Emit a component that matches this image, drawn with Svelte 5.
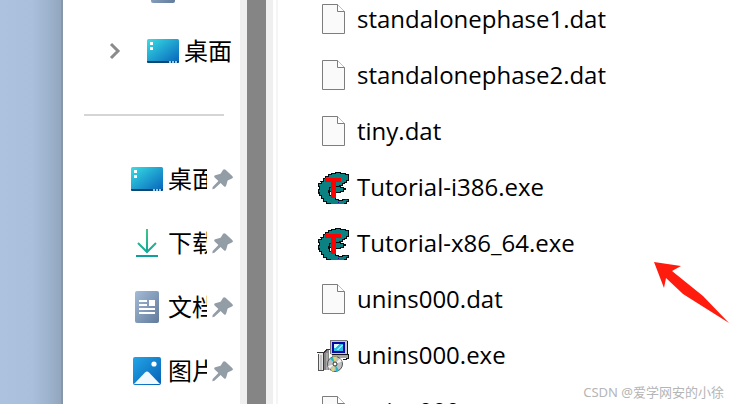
<script lang="ts">
	type FileKind = 'blank' | 'tutorial' | 'setup';

	const pinned = [
		{ name: '桌面', icon: 'desktop' },
		{ name: '下载', icon: 'download' },
		{ name: '文档', icon: 'document' },
		{ name: '图片', icon: 'picture' }
	];

	const files: { name: string; kind: FileKind }[] = [
		{ name: 'standalonephase1.dat', kind: 'blank' },
		{ name: 'standalonephase2.dat', kind: 'blank' },
		{ name: 'tiny.dat', kind: 'blank' },
		{ name: 'Tutorial-i386.exe', kind: 'tutorial' },
		{ name: 'Tutorial-x86_64.exe', kind: 'tutorial' },
		{ name: 'unins000.dat', kind: 'blank' },
		{ name: 'unins000.exe', kind: 'setup' },
		{ name: 'unins000.msg', kind: 'blank' }
	];
</script>

<svg class="defs" width="0" height="0" aria-hidden="true">
	<defs>
		<linearGradient id="teal" x1="0" y1="0" x2="1" y2="1">
			<stop offset="0" stop-color="#38dfe3" />
			<stop offset="0.5" stop-color="#1ea0d0" />
			<stop offset="1" stop-color="#0862ba" />
		</linearGradient>
		<linearGradient id="green" gradientUnits="userSpaceOnUse" x1="0" y1="2" x2="0" y2="30">
			<stop offset="0" stop-color="#3cc886" />
			<stop offset="1" stop-color="#0c9f9c" />
		</linearGradient>
		<linearGradient id="slate" x1="0" y1="0" x2="1" y2="1">
			<stop offset="0" stop-color="#a3bbd6" />
			<stop offset="1" stop-color="#627b9c" />
		</linearGradient>
		<linearGradient id="blue" x1="0" y1="0" x2="1" y2="1">
			<stop offset="0" stop-color="#23a5e7" />
			<stop offset="1" stop-color="#0560b5" />
		</linearGradient>
	</defs>
</svg>

{#snippet placeIcon(icon: string)}
	<svg class="icon" viewBox="0 0 32 32" aria-hidden="true">
		{#if icon === 'desktop'}
			<rect y="4" width="32" height="24" rx="1.5" fill="url(#teal)" />
			<path d="M0 26h32v.5q0 1.500-1.500 1.500h-29Q0 28 0 26.500z" fill="#0b4773" />
			<path d="M3 7h3v3H3zM3 12h3v3H3z" fill="#fff" />
			<path d="M22 26h2v2h-2zM25 26h2v2h-2zM28 26h2v2h-2z" fill="#9acbe9" />
		{:else if icon === 'download'}
			<path
				d="M16 2v23M7 16l9 9 9-9M5 29h22"
				fill="none"
				stroke="url(#green)"
				stroke-width="2"
			/>
		{:else if icon === 'document'}
			<rect x="4" width="24" height="32" rx="2" fill="url(#slate)" />
			<path d="M8 9h8v2H8zM8 13h8v2H8zM18 9h6v6h-6zM8 17h16v2H8zM8 21h16v2H8z" fill="#fff" />
		{:else}
			<rect x="2" y="2" width="28" height="28" rx="2" fill="url(#blue)" />
			<path d="M3 29l11-11.500q2-2 4 0L29 29z" fill="#f1f9ff" />
			<circle cx="23" cy="9" r="2.600" fill="#fff" />
		{/if}
	</svg>
{/snippet}

{#snippet fileIcon(kind: FileKind)}
	<svg class="icon" viewBox="0 0 32 32" aria-hidden="true">
		{#if kind === 'blank'}
			<path d="M5.500 .5h15l7 7v22h-22z" fill="#fafafa" stroke="#7d7d7d" />
			<path d="M20.500 .5v7h7" fill="#fff" stroke="#7d7d7d" />
		{:else if kind === 'tutorial'}
			<g shape-rendering="crispEdges" stroke="#020c10">
				<path
					d="M31.500 2.500h-3v-1h-5v-1h-5v1h-4v1h-3v2h-3v2h-2v3h-2v2h-3v3h1v3h-1v3h1v3h2v3h2v3h3v2h4v1h4v1h6v-1h4v-1h2v-2h2v-2h-6v1h-4v-1h-3v-2h-4v-2h-2v-3h-1v-2h2v-2h3v-2h6v-1h3v-2h2v-1h2v-2h2z"
					fill="#0c8182"
				/>
				<path d="M12.500 15.500h4v-1h7v1h3v1h2v1h-2v2h-3v1h-5v-1h-6z" fill="#0c8182" />
			</g>
			<g shape-rendering="crispEdges">
				<path d="M8 6h16v4h-5v16h-5V10H8z" fill="#f00" />
				<path d="M3 9h1v1H3zM1 21h1v1H1zM21 30h1v1h-1zM28 27h2v1h-2z" fill="#1010a0" />
			</g>
		{:else}
			<g shape-rendering="crispEdges">
				<path d="M14 0h17v15H14z" fill="#cacaca" />
				<path d="M13 0h17v1H14v13h-1z" fill="#777" />
				<path d="M30 1h1v14H15v-1h15z" fill="#151515" />
				<path d="M15 2h13v11H15z" fill="#0808a0" />
				<path d="M17 4h9v7h-9z" fill="#29bee9" />
				<path d="M17 4h5v1h-1v1h-1v1h-1v1h-2z" fill="#d7fbff" />
				<path d="M24 5h2v1h-1v1h-1v1h-1v1h-1v1h-2V9h1V8h1V7h1V6h1z" fill="#8be7fb" />
				<path d="M15 15h16v3H15z" fill="#a6a6a6" />
				<path d="M31 14h1v5h-2v1h-4v-1h3v-1h2z" fill="#151515" />
				<path d="M7 12l5-3v21H7z" fill="#858585" />
				<path d="M2 13h5v18H2z" fill="#e9e9e9" />
				<path d="M3 15h2v15H3z" fill="#c4c4c4" />
				<path d="M0 12h6l4-3h3v1h-2l-4 3v18H6V13H0z" fill="#333" />
				<path d="M1 14h1v16h5v1H1z" fill="#555" />
				<path d="M9 13h2v17H9z" fill="#a8a8a8" />
			</g>
			<circle cx="18" cy="24" r="7.500" fill="#bfc0bf" stroke="#555" />
			<path d="M18 24l-5-5.500 3-1.800zM18 24l4 6.500-3 1z" fill="#24b7c4" />
			<path d="M18 24l-2-7.500h4zM18 24l-1 7.500-3-1z" fill="#ded575" />
			<path d="M18 24l5-5.500 2 3zM18 24l-7 2 1 3z" fill="#f1f1f1" />
			<circle cx="18" cy="24" r="2" fill="#fff" stroke="#333" />
		{/if}
	</svg>
{/snippet}

<div class="screen">
	<div class="wallpaper"></div>

	<nav class="sidebar" aria-label="导航">
		<div class="place tree">
			<svg class="icon" viewBox="0 0 32 32" aria-hidden="true">
				<rect x="4" width="24" height="32" rx="2" fill="url(#slate)" />
			</svg>
		</div>
		<div class="place tree">
			<button class="toggle" aria-label="展开">
				<svg viewBox="0 0 12 18" aria-hidden="true">
					<path d="M2 2l7 7-7 7" fill="none" stroke="#8b8b8b" stroke-width="3" />
				</svg>
			</button>
			<a href="#desktop">
				{@render placeIcon('desktop')}
				<span class="label">桌面</span>
			</a>
		</div>
		<div class="divider"></div>
		{#each pinned as place}
			<div class="place">
				<a href="#{place.icon}">
					{@render placeIcon(place.icon)}
					<span class="label clipped">{place.name}</span>
				</a>
				<svg class="pin" viewBox="0 0 22 22" aria-hidden="true">
					<path
						d="M11.500 1.500q1-1.500 2.700-.2l7 6.500q1.500 1.500-.3 2.700l-4.500 2.200-1.600 5.500q-.8 1.700-2.300.4L9 15.200 2.500 21.200.3 21.700l.4-2.200L6.700 13 2.800 9.300q-1.300-1.500.6-2.100L9 5.500z"
						fill="#929da5"
					/>
				</svg>
			</div>
		{/each}
	</nav>

	<div class="scrollbar"><div class="thumb"></div></div>

	<main class="content">
		<ul class="files">
			{#each files as file}
				<li>
					{@render fileIcon(file.kind)}
					<span>{file.name}</span>
				</li>
			{/each}
		</ul>
	</main>

	<svg class="arrow" viewBox="0 0 76 62" aria-hidden="true">
		<path d="M0 0l27 4-9 5 31 25 26 27-27-17-19-12L12 16l-2 10z" fill="#ff1c0e" />
	</svg>
	<p class="watermark">CSDN @爱学网安的小徐</p>
</div>

<style>
	:global(body) {
		margin: 0;
	}

	.defs {
		position: absolute;
	}

	.screen {
		position: relative;
		display: flex;
		height: 100vh;
		overflow: hidden;
		background: #fff;
		color: #000;
		font-family: 'Open Sans', 'Noto Sans CJK SC', sans-serif;
		font-size: 24px;
	}

	.wallpaper {
		flex: 0 0 61px;
		border-right: 2px solid #8797a9;
		background: linear-gradient(to right, #adc2df 0, #a9bfdc 32px, #9eb3cd 48px, #92a6be 100%);
	}

	.sidebar {
		box-sizing: border-box;
		flex: 0 0 177px;
		margin-top: -45px;
		padding: 0 7px 0 21px;
	}

	.place {
		display: flex;
		align-items: center;
		justify-content: flex-end;
		gap: 5px;
		height: 64px;
	}

	.place a {
		display: flex;
		align-items: center;
		gap: 5px;
		color: inherit;
		text-decoration: none;
	}

	.tree {
		justify-content: flex-start;
		gap: 26px;
		padding-left: 25px;
	}

	.tree > .icon {
		margin-left: 38px;
	}

	.toggle {
		width: 12px;
		height: 18px;
		padding: 0;
		border: 0;
		background: none;
	}

	.toggle svg {
		display: block;
	}

	.icon {
		flex: none;
		width: 32px;
		height: 32px;
	}

	.label {
		padding-bottom: 2px;
		font-family: 'Noto Sans CJK SC', sans-serif;
		line-height: 36px;
		white-space: nowrap;
	}

	.clipped {
		width: 39px;
		overflow: hidden;
	}

	.pin {
		flex: none;
		width: 21px;
		height: 22px;
	}

	.divider {
		display: flex;
		align-items: center;
		height: 64px;
		margin-right: 9px;
	}

	.divider::before {
		content: '';
		flex: 1;
		height: 2px;
		background: #d5d5d5;
	}

	.scrollbar {
		display: flex;
		justify-content: center;
		flex: 0 0 33px;
		background: #efefef;
	}

	.thumb {
		width: 19px;
		background: #858585;
	}

	.content {
		flex: 1;
		min-width: 0;
		margin-left: 3px;
		border-left: 2px solid #f5f5f5;
	}

	.files {
		margin: -8px 0 0;
		padding: 0 0 0 39px;
		list-style: none;
	}

	.files li {
		display: flex;
		align-items: center;
		gap: 8px;
		height: 56px;
		white-space: nowrap;
	}

	.files span {
		padding-bottom: 2px;
		line-height: 32px;
	}

	.arrow {
		position: absolute;
		right: 4px;
		bottom: 80px;
		width: 76px;
		height: 62px;
	}

	.watermark {
		position: absolute;
		right: 10px;
		bottom: 2px;
		margin: 0;
		color: #b5b5b5;
		font-family: 'Noto Sans', 'Noto Sans CJK SC', sans-serif;
		font-size: 13px;
		line-height: 20px;
	}
</style>
